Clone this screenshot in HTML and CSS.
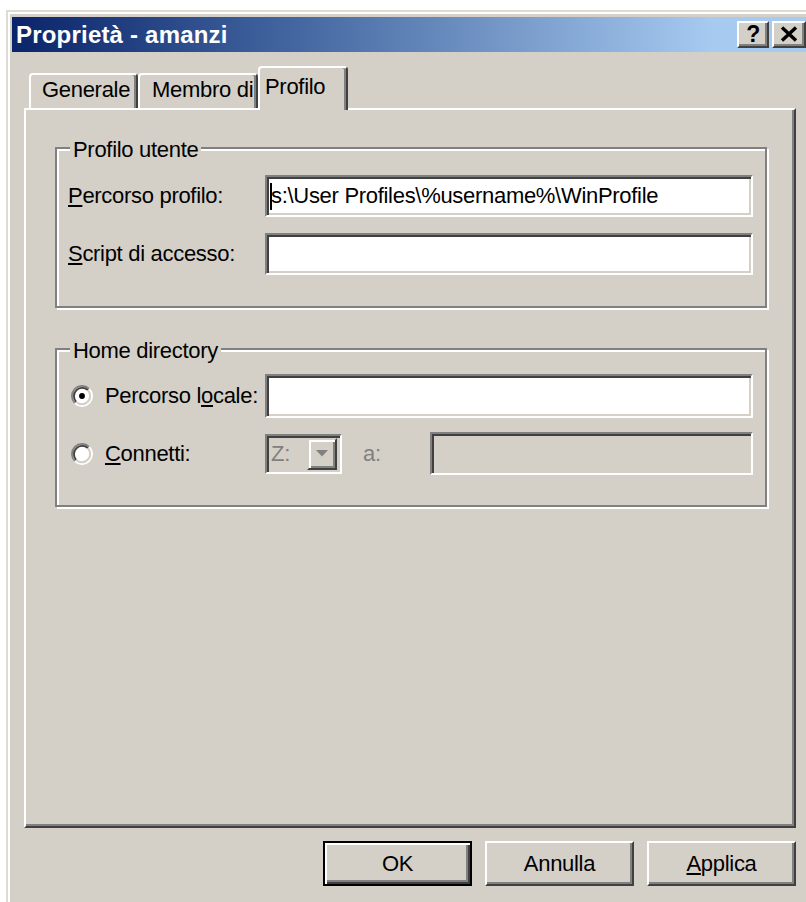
FILE: index.html
```html
<!DOCTYPE html>
<html lang="it">
<head>
<meta charset="utf-8">
<title>Proprietà - amanzi</title>
<link rel="stylesheet" href="styles.css">
</head>
<body>
<div class="window">
  <div class="titlebar">
    <span class="title-text">Proprietà - amanzi</span>
    <div class="caption-buttons">
      <span class="cap-btn help">?</span>
      <span class="cap-btn close">
        <svg width="18" height="16" viewBox="0 0 18 16"><path d="M2 1.5 L16 14.5 M16 1.5 L2 14.5" stroke="#000" stroke-width="3.4" fill="none"/></svg>
      </span>
    </div>
  </div>

  <div class="tabs">
    <div class="tab tab-general">Generale</div>
    <div class="tab tab-member">Membro di</div>
    <div class="tab tab-profile selected">Profilo</div>
  </div>

  <div class="panel">
    <div class="group group-profile">
      <span class="group-title">Profilo utente</span>
      <div class="form-grid">
        <label class="lbl"><u>P</u>ercorso profilo:</label>
        <div class="field"><span class="caret"></span>s:\User Profiles\%username%\WinProfile</div>
        <label class="lbl"><u>S</u>cript di accesso:</label>
        <div class="field"></div>
      </div>
    </div>

    <div class="group group-home">
      <span class="group-title">Home directory</span>
      <div class="form-grid home-grid">
        <label class="radio-label">
          <svg class="radio" width="22" height="22" viewBox="0 0 12 12">
            <circle cx="6" cy="6" r="4.2" fill="#fff"/>
            <path d="M2.11 9.89 A5.5 5.5 0 0 1 9.89 2.11" stroke="#808080" fill="none"/>
            <path d="M9.89 2.11 A5.5 5.5 0 0 1 2.11 9.89" stroke="#fff" fill="none"/>
            <path d="M2.82 9.18 A4.5 4.5 0 0 1 9.18 2.82" stroke="#404040" fill="none"/>
            <path d="M9.18 2.82 A4.5 4.5 0 0 1 2.82 9.18" stroke="#d4d0c8" fill="none"/>
            <circle cx="6" cy="6" r="1.6" fill="#000"/>
          </svg>
          <span>Percorso l<u>o</u>cale:</span>
        </label>
        <div class="field field-tall"></div>

        <label class="radio-label">
          <svg class="radio" width="22" height="22" viewBox="0 0 12 12">
            <circle cx="6" cy="6" r="4.2" fill="#fff"/>
            <path d="M2.11 9.89 A5.5 5.5 0 0 1 9.89 2.11" stroke="#808080" fill="none"/>
            <path d="M9.89 2.11 A5.5 5.5 0 0 1 2.11 9.89" stroke="#fff" fill="none"/>
            <path d="M2.82 9.18 A4.5 4.5 0 0 1 9.18 2.82" stroke="#404040" fill="none"/>
            <path d="M9.18 2.82 A4.5 4.5 0 0 1 2.82 9.18" stroke="#d4d0c8" fill="none"/>
          </svg>
          <span><u>C</u>onnetti:</span>
        </label>
        <div class="connect">
          <div class="combo">
            <span class="combo-value">Z:</span>
            <span class="combo-arrow">
              <svg width="12" height="7" viewBox="0 0 12 7"><path d="M0 0 H12 L6 6.5 Z" fill="#808080"/></svg>
            </span>
          </div>
          <span class="to-label">a:</span>
          <div class="field field-disabled"></div>
        </div>
      </div>
    </div>
  </div>

  <div class="buttons">
    <span class="btn default">OK</span>
    <span class="btn">Annulla</span>
    <span class="btn"><u>A</u>pplica</span>
  </div>
</div>
</body>
</html>
```

FILE: styles.css
```css
* {
  box-sizing: border-box;
}

body {
  margin: 0;
  background: #fff;
  overflow: hidden;
  font-family: "Liberation Sans", Arial, sans-serif;
  font-size: 22px;
  letter-spacing: -0.3px;
  color: #000;
}

u {
  text-decoration-thickness: 2px;
  text-underline-offset: 2px;
}

/* dialog frame */
.window {
  margin: 10px 0 0 6px;
  width: 812px;
  height: 900px;
  background: #d4d0c8;
  border-top: 2px solid #dedbd5;
  border-left: 2px solid #dedbd5;
  box-shadow: inset 2px 2px 0 #fff;
  padding: 5px 0 0 4px;
}

.titlebar {
  width: 796px;
  height: 35px;
  display: flex;
  align-items: center;
  justify-content: space-between;
  padding: 0 2px 0 4px;
  background: linear-gradient(90deg, #0a246a 0%, #3a5c98 30%, #a6caf0 88%, #a6caf0 100%);
}

.title-text {
  color: #fff;
  font-weight: bold;
  font-size: 24px;
  letter-spacing: 0.2px;
}

.caption-buttons {
  display: flex;
  gap: 3px;
  margin-top: -1px;
}

.cap-btn {
  width: 32px;
  height: 27px;
  background: #d4d0c8;
  border: 2px solid;
  border-color: #fff #404040 #404040 #fff;
  box-shadow: inset -2px -2px 0 #808080;
  display: flex;
  align-items: center;
  justify-content: center;
  font-weight: bold;
  font-size: 23px;
  line-height: 1;
}

.cap-btn.close {
  width: 34px;
}

/* tab strip */
.tabs {
  display: flex;
  align-items: flex-end;
  height: 44px;
  margin: 14px 0 -2px 17px;
}

.tab {
  height: 35px;
  margin-bottom: 2px;
  border: 2px solid #fff;
  border-bottom: none;
  border-right-color: #404040;
  border-radius: 4px 4px 0 0;
  box-shadow: inset -2px 0 0 #808080;
  background: #d4d0c8;
  padding-top: 3px;
  line-height: 24px;
  white-space: nowrap;
}

.tab-general {
  width: 109px;
  padding-left: 11px;
}

.tab-member {
  width: 120px;
  padding-left: 12px;
}

.tab-profile {
  width: 90px;
  padding-left: 5px;
}

.tab.selected {
  position: relative;
  z-index: 1;
  height: 44px;
  margin-bottom: 0;
  padding-top: 7px;
}

/* property page */
.panel {
  margin-left: 12px;
  width: 772px;
  height: 720px;
  border: 2px solid;
  border-color: #fff #404040 #404040 #fff;
  box-shadow: inset -2px -2px 0 #808080;
  padding: 37px 27px 0 29px;
}

.group {
  position: relative;
  border: 2px solid #808080;
  box-shadow: inset 2px 2px 0 #fff, 2px 2px 0 #fff;
  padding: 26px 12px 31px 11px;
}

.group-home {
  margin-top: 40px;
  padding: 24px 12px 30px 11px;
}

.group-title {
  position: absolute;
  top: -11px;
  left: 13px;
  padding: 0 3px;
  line-height: 24px;
  background: #d4d0c8;
  white-space: nowrap;
}

.form-grid {
  display: grid;
  grid-template-columns: 197px 1fr;
  row-gap: 16px;
  align-items: center;
}

.home-grid {
  row-gap: 14px;
}

.lbl {
  white-space: nowrap;
}

.field {
  height: 42px;
  border: 2px solid;
  border-color: #808080 #fff #fff #808080;
  box-shadow: inset 2px 2px 0 #404040, inset -2px -2px 0 #d4d0c8;
  background: #fff;
  display: flex;
  align-items: center;
  padding-left: 3px;
  overflow: hidden;
  white-space: nowrap;
}

.field-tall {
  height: 44px;
}

.field-disabled {
  flex: 1;
  height: 43px;
  background: #d4d0c8;
}

.caret {
  flex: none;
  width: 2px;
  height: 27px;
  background: #000;
  margin-right: -1px;
}

.radio-label {
  display: flex;
  align-items: center;
  gap: 12px;
  padding-left: 3px;
  white-space: nowrap;
}

.radio {
  flex: none;
  display: block;
}

.connect {
  display: flex;
  align-items: center;
}

.combo {
  width: 77px;
  height: 40px;
  border: 2px solid;
  border-color: #808080 #fff #fff #808080;
  box-shadow: inset 2px 2px 0 #404040, inset -2px -2px 0 #d4d0c8;
  background: #d4d0c8;
  display: flex;
  align-items: center;
  padding-right: 3px;
}

.combo-value {
  flex: 1;
  padding-left: 4px;
  color: #808080;
}

.combo-arrow {
  width: 30px;
  height: 32px;
  border: 2px solid;
  border-color: #d4d0c8 #404040 #404040 #d4d0c8;
  box-shadow: inset 2px 2px 0 #fff, inset -2px -2px 0 #808080;
  background: #d4d0c8;
  display: flex;
  align-items: center;
  justify-content: center;
}

.combo-arrow svg {
  display: block;
}

.to-label {
  flex: none;
  width: 88px;
  padding-left: 21px;
  color: #808080;
}

/* dialog buttons */
.buttons {
  display: flex;
  justify-content: flex-end;
  gap: 13px;
  width: 772px;
  margin: 13px 0 0 12px;
}

.btn {
  width: 149px;
  height: 45px;
  background: #d4d0c8;
  border: 2px solid;
  border-color: #fff #404040 #404040 #fff;
  box-shadow: inset -2px -2px 0 #808080;
  display: flex;
  align-items: center;
  justify-content: center;
}

.btn.default {
  border-color: #000;
  box-shadow: inset 2px 2px 0 #fff, inset -2px -2px 0 #404040, inset -4px -4px 0 #808080;
}
```
